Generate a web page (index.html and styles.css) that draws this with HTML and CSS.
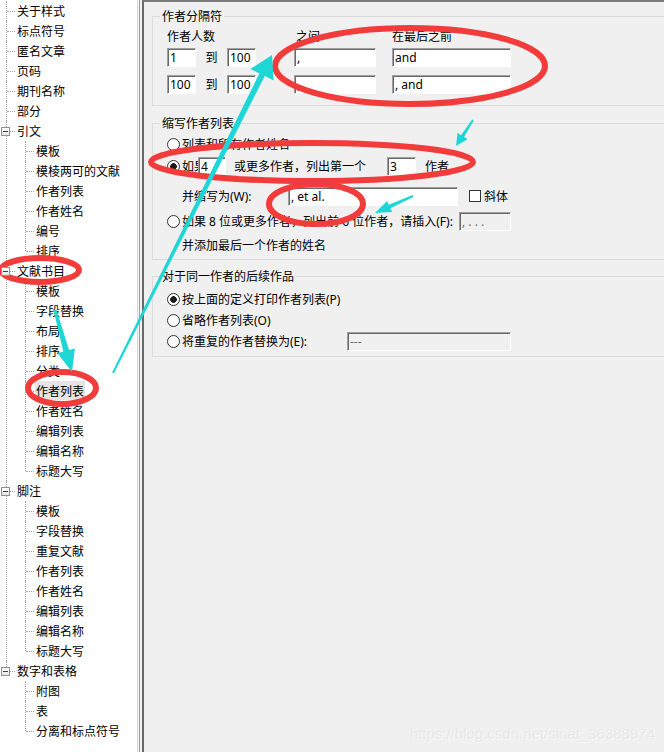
FILE: index.html
```html
<!DOCTYPE html>
<html lang="zh-CN">
<head>
    <meta charset="UTF-8">
    <title>输出样式 - 文献书目 - 作者列表</title>
    <link rel="stylesheet" href="styles.css">
</head>
<body>
    <div class="window">
        <ul class="tree">
            <li><span class="label">关于样式</span></li>
            <li><span class="label">标点符号</span></li>
            <li><span class="label">匿名文章</span></li>
            <li><span class="label">页码</span></li>
            <li><span class="label">期刊名称</span></li>
            <li><span class="label">部分</span></li>
            <li class="open"><span class="toggle"></span><span class="label">引文</span>
                <ul>
                    <li><span class="label">模板</span></li>
                    <li><span class="label">模棱两可的文献</span></li>
                    <li><span class="label">作者列表</span></li>
                    <li><span class="label">作者姓名</span></li>
                    <li><span class="label">编号</span></li>
                    <li><span class="label">排序</span></li>
                </ul>
            </li>
            <li class="open"><span class="toggle"></span><span class="label">文献书目</span>
                <ul>
                    <li><span class="label">模板</span></li>
                    <li><span class="label">字段替换</span></li>
                    <li><span class="label">布局</span></li>
                    <li><span class="label">排序</span></li>
                    <li><span class="label">分类</span></li>
                    <li><span class="label"><span class="sel">作者列表</span></span></li>
                    <li><span class="label">作者姓名</span></li>
                    <li><span class="label">编辑列表</span></li>
                    <li><span class="label">编辑名称</span></li>
                    <li><span class="label">标题大写</span></li>
                </ul>
            </li>
            <li class="open"><span class="toggle"></span><span class="label">脚注</span>
                <ul>
                    <li><span class="label">模板</span></li>
                    <li><span class="label">字段替换</span></li>
                    <li><span class="label">重复文献</span></li>
                    <li><span class="label">作者列表</span></li>
                    <li><span class="label">作者姓名</span></li>
                    <li><span class="label">编辑列表</span></li>
                    <li><span class="label">编辑名称</span></li>
                    <li><span class="label">标题大写</span></li>
                </ul>
            </li>
            <li class="open"><span class="toggle"></span><span class="label">数字和表格</span>
                <ul>
                    <li><span class="label">附图</span></li>
                    <li><span class="label">表</span></li>
                    <li><span class="label">分离和标点符号</span></li>
                </ul>
            </li>
        </ul>

        <div class="splitter"></div>

        <div class="pane">
            <fieldset class="group first">
                <legend>作者分隔符</legend>
                <div class="sep-grid">
                    <span class="head">作者人数</span>
                    <span></span><span></span><span></span>
                    <span class="head">之间</span>
                    <span></span>
                    <span class="head">在最后之前</span>

                    <input class="field" type="text" value="1">
                    <span class="to">到</span>
                    <input class="field" type="text" value="100">
                    <span></span>
                    <input class="field" type="text" value=",">
                    <span></span>
                    <input class="field" type="text" value="and">

                    <input class="field" type="text" value="100">
                    <span class="to">到</span>
                    <input class="field" type="text" value="100">
                    <span></span>
                    <input class="field" type="text" value=",">
                    <span></span>
                    <input class="field" type="text" value=", and">
                </div>
            </fieldset>

            <fieldset class="group">
                <legend>缩写作者列表</legend>
                <div class="body abbr">
                    <label class="row">
                        <input type="radio" name="abbr">列表和所有作者姓名
                    </label>
                    <label class="row r2">
                        <input type="radio" name="abbr" checked>如果
                        <input class="field num-a" type="text" value="4">
                        <span class="gap-a">或更多作者，列出第一个</span>
                        <input class="field num-b" type="text" value="3">
                        <span class="gap-b">作者</span>
                    </label>
                    <div class="row r3 indent">
                        <span class="lbl-w">并缩写为(W):</span>
                        <input class="field etal" type="text" value=", et al.">
                        <input type="checkbox" class="check">
                        <span class="italic-lbl">斜体</span>
                    </div>
                    <label class="row r4">
                        <input type="radio" name="abbr">
                        <span class="lbl-f">如果 8 位或更多作者，列出前 6 位作者，请插入(F):</span>
                        <input class="field dots" type="text" value=", . . ." disabled>
                    </label>
                    <div class="row r5 indent">并添加最后一个作者的姓名</div>
                </div>
            </fieldset>

            <fieldset class="group">
                <legend>对于同一作者的后续作品</legend>
                <div class="body later">
                    <label class="row">
                        <input type="radio" name="later" checked>按上面的定义打印作者列表(P)
                    </label>
                    <label class="row">
                        <input type="radio" name="later">省略作者列表(O)
                    </label>
                    <label class="row">
                        <input type="radio" name="later">
                        <span class="lbl-e">将重复的作者替换为(E):</span>
                        <input class="field repl" type="text" value="---" disabled>
                    </label>
                </div>
            </fieldset>
        </div>
    </div>

    <!-- red circles and cyan arrows drawn on top of the screenshot -->
    <svg class="marks" width="664" height="752" viewBox="0 0 664 752">
        <g fill="none" stroke="#f23b3b" stroke-width="6">
            <ellipse cx="410" cy="66" rx="135" ry="38"/>
            <ellipse cx="312" cy="162" rx="161" ry="19"/>
            <ellipse cx="316" cy="204" rx="47" ry="20"/>
            <ellipse cx="40" cy="270" rx="39" ry="12"/>
            <ellipse cx="62" cy="388" rx="34" ry="16"/>
        </g>
        <g fill="#1fd6d6">
            <polygon points="112.1,372.6 259.4,73.4 250.5,68.9 272,55 273.7,80.5 264.8,76 113.9,373.4"/>
            <polygon points="53.6,310.4 63.3,351.6 57.5,353.2 72,372 74.9,348.4 69.1,350 56.4,309.6"/>
            <polygon points="472.2,119.5 461,135.3 457.6,132.7 456,146 467.6,139.3 464.2,136.7 473.8,120.5"/>
            <polygon points="412.6,195.1 388.8,204.7 387.1,201 375,213 392.1,212 390.4,208.3 413.4,196.9"/>
        </g>
    </svg>

    <div class="watermark">https://blog.csdn.net/sinat_36388974</div>
</body>
</html>
```

FILE: styles.css
```css
body {
    margin: 0;
    width: 664px;
    height: 752px;
    overflow: hidden;
    position: relative;
    background-color: #f0f0f0;
    font-family: "Noto Sans", "Noto Sans CJK SC", sans-serif;
    font-size: 12px;
    color: #000;
}

.window {
    display: flex;
    height: 752px;
}

/* tree on the left */
.tree {
    width: 138px;
    flex: none;
    margin: 0;
    padding: 1px 0 0 6px;
    box-sizing: border-box;
    background-color: #fff;
    border-right: 1px solid #dcdcdc;
    list-style: none;
    overflow: hidden;
    font-family: "Noto Sans CJK SC", sans-serif;
}

.tree ul {
    margin: 0 0 0 8px;
    padding: 0;
    list-style: none;
}

.tree li {
    position: relative;
    padding-left: 10px;
    border-left: 1px dotted #a0a0a0;
}

.tree li::before {
    content: "";
    position: absolute;
    left: 0;
    top: 10px;
    width: 8px;
    border-top: 1px dotted #a0a0a0;
}

.tree li:last-child {
    border-left-color: transparent;
}

.tree li:last-child::after {
    content: "";
    position: absolute;
    left: -1px;
    top: 0;
    height: 10px;
    border-left: 1px dotted #a0a0a0;
}

.label {
    display: block;
    height: 20px;
    line-height: 20px;
    white-space: nowrap;
}

.sel {
    background-color: #e5e5e5;
    padding: 1px 1px;
    margin-left: -1px;
}

.toggle {
    position: absolute;
    left: -6px;
    top: 6px;
    width: 7px;
    height: 7px;
    border: 1px solid #919191;
    background: linear-gradient(#fff, #e6e6e6);
    z-index: 1;
}

.toggle::after {
    content: "";
    position: absolute;
    left: 1px;
    top: 3px;
    width: 5px;
    height: 1px;
    background-color: #3c3c3c;
}

.splitter {
    width: 4px;
    flex: none;
    background: linear-gradient(to right, #f0f0f0 1px, #a0a0a0 1px, #a0a0a0 2px, #f0f0f0 2px);
}

/* settings pane */
.pane {
    flex: 1;
    border-left: 2px solid #696969;
    border-top: 2px solid #7a7a7a;
    padding-left: 8px;
    overflow: hidden;
}

.group {
    border: 1px solid #dcdcdc;
    margin: 9px -40px 0 0;
    padding: 0;
    min-width: 0;
}

.group.first {
    margin-top: 7px;
}

.group + .group {
    margin-top: 10px;
}

.group + .group + .group {
    margin-top: 9px;
}

legend {
    margin-left: 7px;
    padding: 0 2px;
    line-height: 14px;
    font-family: "Noto Sans CJK SC", sans-serif;
}

.sep-grid {
    display: grid;
    grid-template-columns: 29px 31px 29px 38px 82px 16px 119px;
    grid-template-rows: 18px 27px 19px;
    align-items: start;
    padding: 7px 0 11px 14px;
}

.head {
    line-height: 14px;
    white-space: nowrap;
}

.head:nth-child(5) {
    padding-left: 2px;
}

.to {
    line-height: 19px;
    text-align: center;
}

.field {
    box-sizing: border-box;
    height: 19px;
    margin: 0;
    padding: 0 2px;
    border: 1px solid;
    border-color: #a0a0a0 #fff #fff #a0a0a0;
    box-shadow: inset 1px 1px 0 #696969;
    background-color: #fff;
    font-family: "Noto Sans", sans-serif;
    font-size: 12px;
    color: #000;
    outline: none;
}

.field:disabled {
    background-color: #f0f0f0;
    color: #6d6d6d;
}

.body {
    padding: 4px 0 4px 14px;
}

.body.later {
    padding: 6px 0 5px 14px;
}

.later .row + .row {
    margin-top: 1px;
}

.row {
    display: flex;
    align-items: center;
    height: 20px;
    white-space: nowrap;
}

.indent {
    padding-left: 15px;
}

.r2 { margin-top: 2px; }
.r3 { margin-top: 10px; }
.r4 { margin-top: 5px; }
.r5 { margin-top: 4px; }

input[type="radio"] {
    appearance: none;
    width: 13px;
    height: 13px;
    margin: 0 2px 0 0;
    border: 1px solid #333;
    border-radius: 50%;
    background-color: #fff;
    flex: none;
}

input[type="radio"]:checked {
    background: radial-gradient(circle, #1b1b1b 0, #1b1b1b 3px, #fff 3.6px);
}

.check {
    appearance: none;
    width: 12px;
    height: 12px;
    margin: 0 3px 0 11px;
    border: 1px solid #333;
    background-color: #fff;
    flex: none;
}

.num-a {
    width: 28px;
    margin-left: -8px;
}

.gap-a {
    margin-left: 8px;
}

.num-b {
    width: 29px;
    margin-left: 21px;
}

.gap-b {
    margin-left: 9px;
}

.lbl-w {
    width: 106px;
    flex: none;
}

.etal {
    width: 170px;
}

.lbl-f {
    width: 277px;
    flex: none;
}

.dots {
    width: 52px;
}

.lbl-e {
    width: 165px;
    flex: none;
}

.repl {
    width: 164px;
}

/* annotations on top */
.marks {
    position: absolute;
    left: 0;
    top: 0;
    pointer-events: none;
}

.watermark {
    position: absolute;
    right: 9px;
    bottom: 10px;
    font-family: "Liberation Sans", Arial, sans-serif;
    font-size: 15px;
    color: #e8e8e8;
    text-shadow: 1px 1px 0 #f8f8f8;
}
```
